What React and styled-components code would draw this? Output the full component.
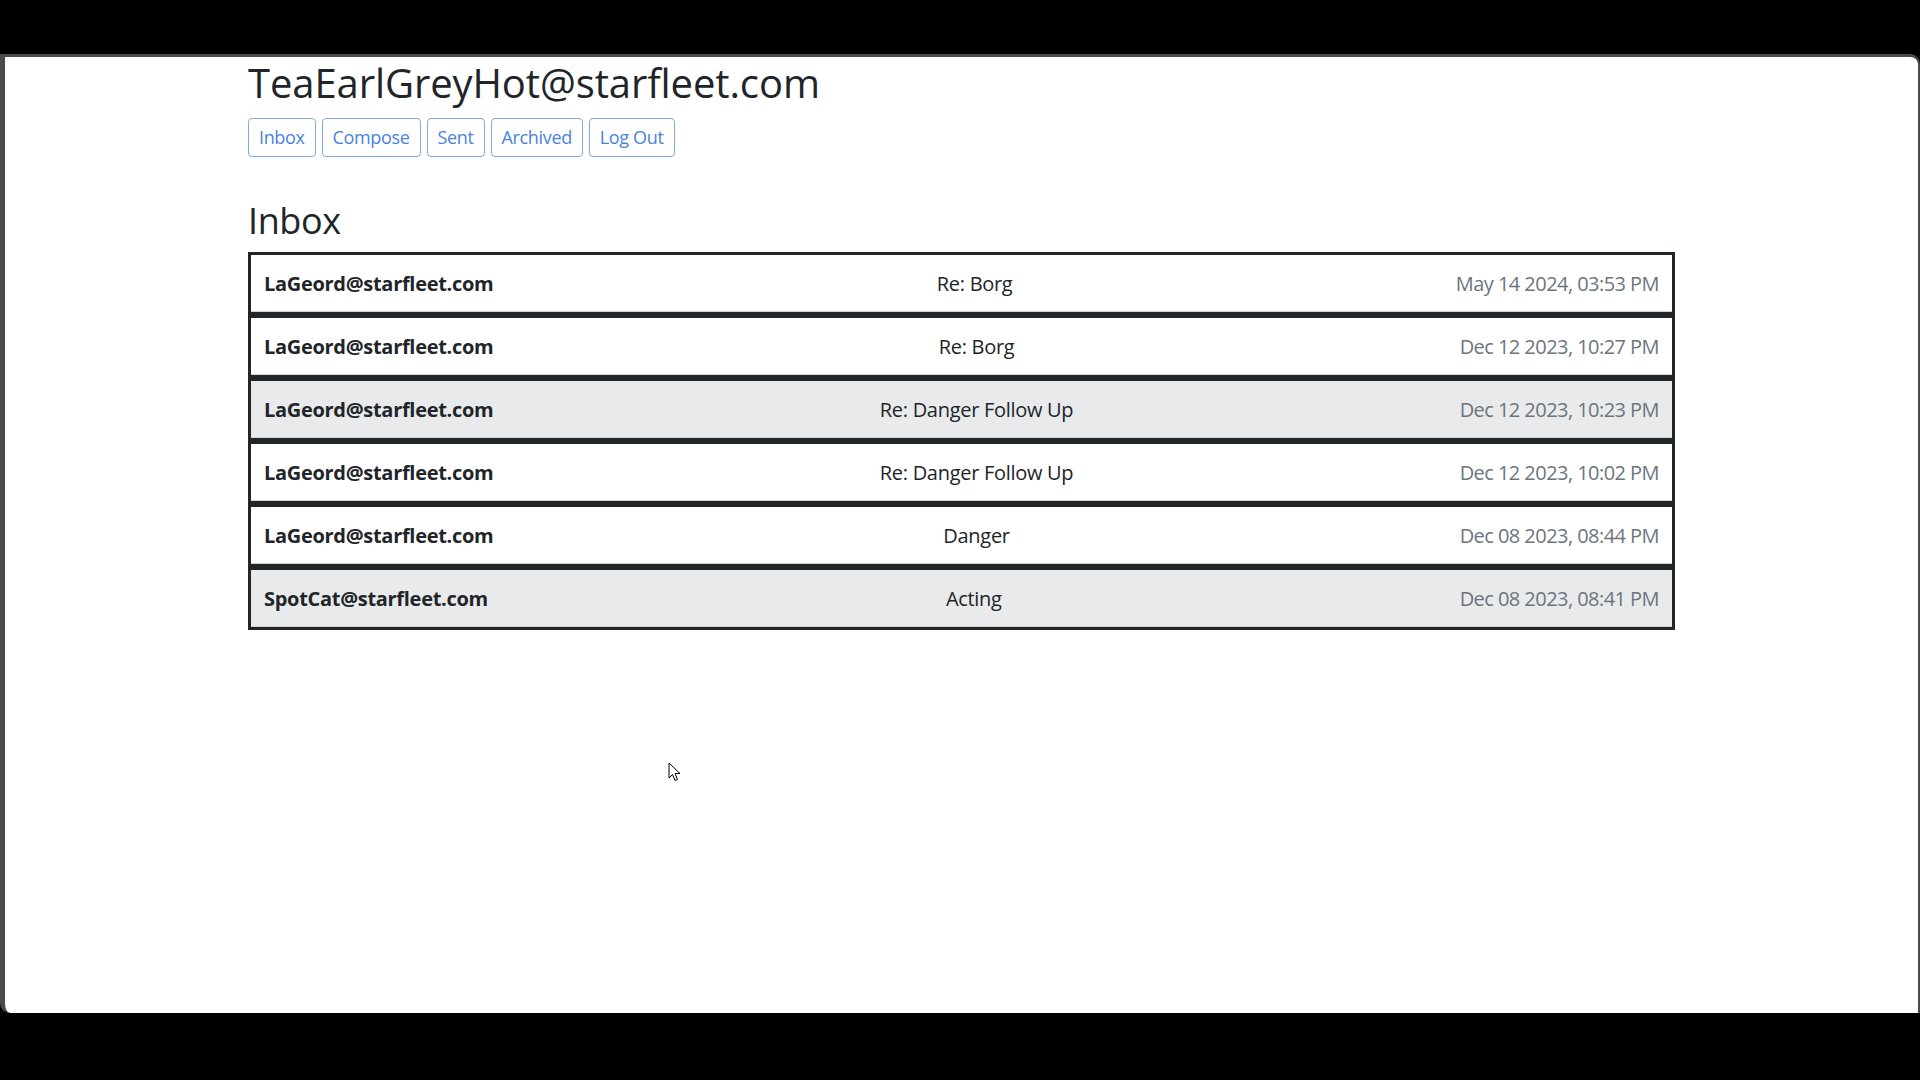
import React from 'react'
import styled, { createGlobalStyle } from 'styled-components'

const GlobalStyle = createGlobalStyle`
html, body {
  margin: 0;
  padding: 0;
  background: #000;
}
body {
  font-family: "Open Sans", "Noto Sans", Arial, sans-serif;
  color: #212529;
}
`

const Screen = styled.div`
width: 1920px;
height: 1080px;
padding-top: 54px;
box-sizing: border-box;
background: #000;
overflow: hidden;
`
const Window = styled.div`
position: relative;
height: 959px;
box-sizing: border-box;
background: #fff;
border-top: 3px solid #4b4b4b;
border-left: 5px solid #4b4b4b;
border-right: 2px solid #4b4b4b;
border-radius: 0 10px 0 10px;
padding-top: 2px;
`
const Container = styled.div`
max-width: 1427px;
margin: 0 auto;
`
const Title = styled.h1`
margin: 0;
font-size: 40px;
line-height: 48px;
font-weight: 500;
letter-spacing: -0.1px;
color: #212529;
`
const Nav = styled.div`
display: flex;
gap: 6px;
margin-top: 11px;
`
const NavButton = styled.button`
font-family: inherit;
font-size: 18px;
line-height: 27px;
padding: 5px 10px;
background: #fff;
color: #4a82dc;
border: 1px solid #80aadb;
border-radius: 4px;
cursor: pointer;
letter-spacing: -0.35px;
`
const SectionTitle = styled.h2`
margin: 42px 0 10px;
font-size: 36px;
line-height: 43px;
font-weight: 500;
letter-spacing: -0.4px;
`
const List = styled.div`
display: flex;
flex-direction: column;
`
const Row = styled.div`
display: flex;
justify-content: space-between;
align-items: center;
border: 3px solid #232629;
padding: 14px 13px 13px;
font-size: 20px;
line-height: 30px;
letter-spacing: -0.3px;
background: ${p => (p.$read ? '#e8eaeb' : '#fff')};
box-shadow: inset 0 -1px 0 #cfd3d6;
cursor: pointer;
`
const Sender = styled.span`
font-weight: 700;
color: #212529;
`
const Subject = styled.span`
color: #212529;
`
const Stamp = styled.span`
color: #6c757d;
letter-spacing: -0.55px;
`
const Cursor = styled.svg`
position: absolute;
left: 663px;
top: 705px;
`

const messages = [
  { from: 'LaGeord@starfleet.com', subject: 'Re: Borg', date: 'May 14 2024, 03:53 PM' },
  { from: 'LaGeord@starfleet.com', subject: 'Re: Borg', date: 'Dec 12 2023, 10:27 PM' },
  { from: 'LaGeord@starfleet.com', subject: 'Re: Danger Follow Up', date: 'Dec 12 2023, 10:23 PM', read: true },
  { from: 'LaGeord@starfleet.com', subject: 'Re: Danger Follow Up', date: 'Dec 12 2023, 10:02 PM' },
  { from: 'LaGeord@starfleet.com', subject: 'Danger', date: 'Dec 08 2023, 08:44 PM' },
  { from: 'SpotCat@starfleet.com', subject: 'Acting', date: 'Dec 08 2023, 08:41 PM', read: true },
]

export default function App() {
  return (
    <Screen>
      <GlobalStyle />
      <Window>
        <Container>
          <Title>TeaEarlGreyHot@starfleet.com</Title>
          <Nav>
            <NavButton>Inbox</NavButton>
            <NavButton>Compose</NavButton>
            <NavButton>Sent</NavButton>
            <NavButton>Archived</NavButton>
            <NavButton>Log Out</NavButton>
          </Nav>
          <SectionTitle>Inbox</SectionTitle>
          <List>
            {messages.map((m, i) => (
              <Row key={i} $read={m.read}>
                <Sender>{m.from}</Sender>
                <Subject>{m.subject}</Subject>
                <Stamp>{m.date}</Stamp>
              </Row>
            ))}
          </List>
        </Container>
        <Cursor width="14" height="22" viewBox="0 0 14 22">
          <path d="M1 1 L1 16 L4.5 12.5 L7 18.5 L9.5 17.5 L7 11.5 L12 11.5 Z" fill="#fff" stroke="#000" strokeWidth="1" strokeLinejoin="round" />
        </Cursor>
      </Window>
    </Screen>
  )
}
